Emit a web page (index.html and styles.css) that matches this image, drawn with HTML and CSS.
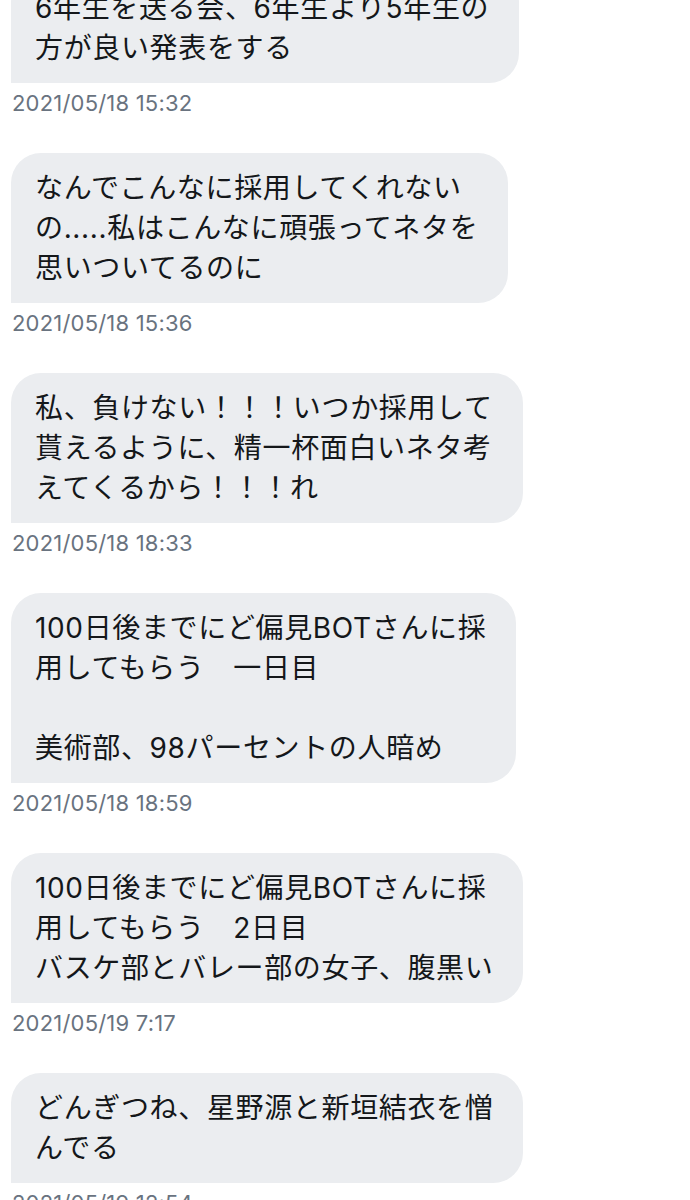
FILE: index.html
```html
<!DOCTYPE html>
<html lang="ja">
<head>
<meta charset="utf-8">
<title>Messages</title>
<link rel="stylesheet" href="styles.css">
</head>
<body>
<main class="thread">
  <div class="msg">
    <div class="bubble">6年生を送る会、6年生より5年生の<br>方が良い発表をする</div>
    <div class="time">2021/05/18 15:32</div>
  </div>
  <div class="msg">
    <div class="bubble">なんでこんなに採用してくれない<br>の.....私はこんなに頑張ってネタを<br>思いついてるのに</div>
    <div class="time">2021/05/18 15:36</div>
  </div>
  <div class="msg">
    <div class="bubble">私、負けない！！！いつか採用して<br>貰えるように、精一杯面白いネタ考<br>えてくるから！！！れ</div>
    <div class="time">2021/05/18 18:33</div>
  </div>
  <div class="msg">
    <div class="bubble">100日後までにど偏見BOTさんに採<br>用してもらう　一日目<br><br>美術部、98パーセントの人暗め</div>
    <div class="time">2021/05/18 18:59</div>
  </div>
  <div class="msg">
    <div class="bubble">100日後までにど偏見BOTさんに採<br>用してもらう　2日目<br>バスケ部とバレー部の女子、腹黒い</div>
    <div class="time">2021/05/19 7:17</div>
  </div>
  <div class="msg">
    <div class="bubble">どんぎつね、星野源と新垣結衣を憎<br>んでる</div>
    <div class="time">2021/05/19 12:54</div>
  </div>
</main>
</body>
</html>
```

FILE: styles.css
```css
html, body {
  margin: 0;
  padding: 0;
  background: #ffffff;
}

.thread {
  display: flex;
  flex-direction: column;
  gap: 38px;
  padding: 0 11px;
  margin-top: -27px;
}

.msg {
  display: flex;
  flex-direction: column;
  align-items: flex-start;
}

.bubble {
  background: #ebedf0;
  color: #14171a;
  font-family: "Inter", "Noto Sans CJK JP", sans-serif;
  font-size: 28px;
  line-height: 40px;
  letter-spacing: 0.65px;
  padding: 15px 30px 15px 24px;
  border-radius: 30px 30px 30px 0;
  white-space: nowrap;
}

.time {
  margin-top: 8px;
  font-family: "Inter", "Liberation Sans", sans-serif;
  font-size: 22px;
  line-height: 24px;
  letter-spacing: 0.2px;
  color: #69737f;
  padding-left: 1px;
}
```
